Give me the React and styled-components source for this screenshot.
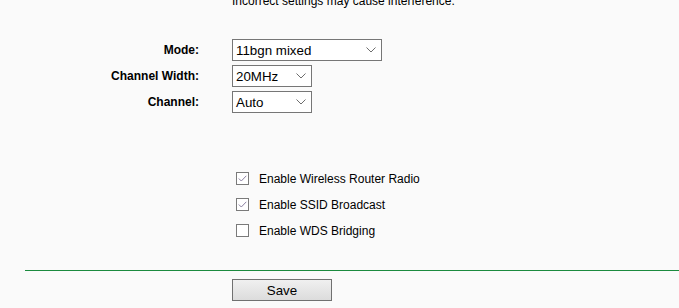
import React from 'react';
import styled, { createGlobalStyle } from 'styled-components';

const GlobalStyle = createGlobalStyle`
  html, body {
    margin: 0;
    padding: 0;
    background: #fafafa;
  }
  body {
    font-family: "Liberation Sans", Arial, sans-serif;
    font-size: 12px;
    color: #000;
    overflow: hidden;
  }
`;

const Page = styled.div`
  width: 679px;
  height: 308px;
  margin-top: -6px;
`;

const Note = styled.div`
  padding-left: 232px;
  line-height: 14px;
  height: 14px;
  color: #000;
`;

const Form = styled.div`
  display: grid;
  grid-template-columns: 199px auto;
  grid-auto-rows: 22px;
  column-gap: 33px;
  row-gap: 4px;
  margin-top: 31px;
  align-items: center;
  justify-items: start;
`;

const Label = styled.label`
  justify-self: end;
  font-weight: bold;
  font-size: 12px;
  line-height: 14px;
`;

const SelectBox = styled.div`
  position: relative;
  box-sizing: border-box;
  width: ${(p) => p.$width}px;
  height: 22px;
  border: 1px solid #767676;
  background: #fff;
  display: flex;
  align-items: center;
  padding-left: 3px;
  font-size: 13.33px;
`;

const Chevron = styled.svg`
  position: absolute;
  right: 5px;
  top: 7px;
`;

function Select({ width, value }) {
  return (
    <SelectBox $width={width}>
      {value}
      <Chevron width="10" height="6" viewBox="0 0 10 6">
        <polyline points="0.5,0.5 5,5 9.5,0.5" fill="none" stroke="#6d6d6d" strokeWidth="1" />
      </Chevron>
    </SelectBox>
  );
}

const Options = styled.div`
  display: flex;
  flex-direction: column;
  gap: 13px;
  margin-top: 59px;
  padding-left: 236px;
`;

const OptionRow = styled.div`
  display: flex;
  align-items: center;
  gap: 10px;
  height: 13px;
  font-size: 12px;
`;

const Box = styled.span`
  box-sizing: border-box;
  width: 13px;
  height: 13px;
  border: 1px solid #7a7a7a;
  background: #fff;
  display: flex;
  align-items: center;
  justify-content: center;
`;

function Option({ checked, children }) {
  return (
    <OptionRow>
      <Box>
        {checked && (
          <svg width="9" height="7" viewBox="0 0 9 7">
            <polyline points="0.8,3.5 3.3,6 8.3,0.8" fill="none" stroke="#8a7fa0" strokeWidth="1" />
          </svg>
        )}
      </Box>
      {children}
    </OptionRow>
  );
}

const Divider = styled.div`
  margin: 33px 0 1px 25px;
  height: 1px;
  background-color: #1b8a3e;
`;

const Actions = styled.div`
  padding: 7px 0 0 232px;
`;

const SaveButton = styled.button`
  box-sizing: border-box;
  width: 100px;
  height: 22px;
  border: 1px solid #707070;
  background: linear-gradient(#f0f0f0, #dcdcdc);
  font-family: "Liberation Sans", Arial, sans-serif;
  font-size: 13.33px;
  color: #000;
  padding: 0;
`;

export default function App() {
  return (
    <>
      <GlobalStyle />
      <Page>
        <Note>Incorrect settings may cause interference.</Note>
        <Form>
          <Label>Mode:</Label>
          <Select width={150} value="11bgn mixed" />
          <Label>Channel Width:</Label>
          <Select width={80} value="20MHz" />
          <Label>Channel:</Label>
          <Select width={80} value="Auto" />
        </Form>
        <Options>
          <Option checked>Enable Wireless Router Radio</Option>
          <Option checked>Enable SSID Broadcast</Option>
          <Option>Enable WDS Bridging</Option>
        </Options>
        <Divider />
        <Actions>
          <SaveButton>Save</SaveButton>
        </Actions>
      </Page>
    </>
  );
}
